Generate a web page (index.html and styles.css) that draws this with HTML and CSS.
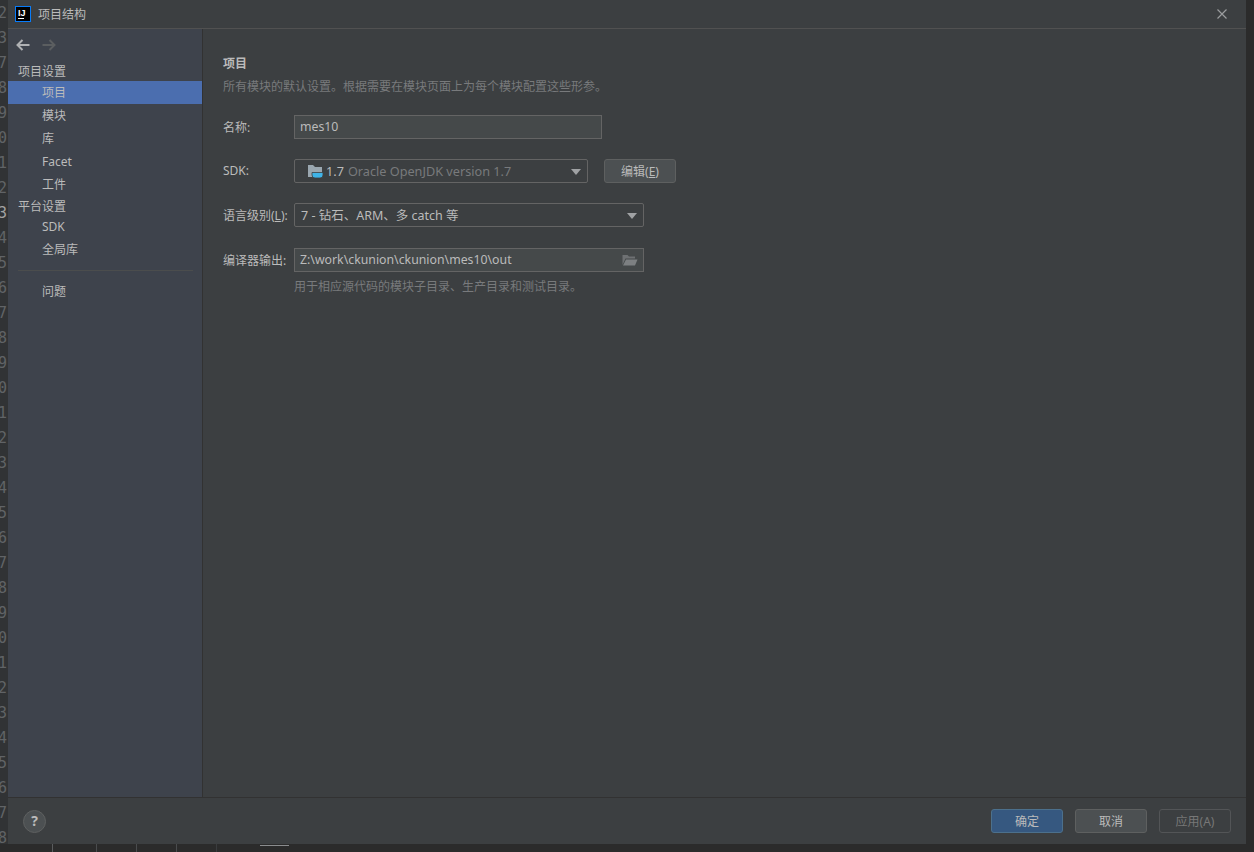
FILE: index.html
```html
<!DOCTYPE html>
<html lang="zh-CN">
<head>
    <meta charset="UTF-8">
    <title>项目结构</title>
    <link rel="stylesheet" href="styles.css">
</head>
<body>

<div class="screen">
    <div class="main-row">
        <!-- editor gutter behind the dialog -->
        <div class="gutter">
            <div>2</div><div>3</div><div>7</div><div>8</div><div>9</div>
            <div>0</div><div>1</div><div>2</div><div class="current">3</div><div>4</div>
            <div>5</div><div>6</div><div>7</div><div>8</div><div>9</div>
            <div>0</div><div>1</div><div>2</div><div>3</div><div>4</div>
            <div>5</div><div>6</div><div>7</div><div>8</div><div>9</div>
            <div>0</div><div>1</div><div>2</div><div>3</div><div>4</div>
            <div>5</div><div>6</div><div>7</div><div>8</div>
        </div>

        <div class="dialog">
            <div class="title-bar">
                <svg class="app-logo" width="16" height="16" viewBox="0 0 16 16">
                    <rect x="0.5" y="0.5" width="15" height="15" fill="#000" stroke="#087cfa"/>
                    <text x="3" y="9.5" class="app-logo-text">IJ</text>
                    <rect x="3" y="12" width="6" height="1" fill="#fff"/>
                </svg>
                <div class="title-text">项目结构</div>
                <svg class="close-icon" width="12" height="12" viewBox="0 0 12 12">
                    <path d="M1.5 1.5 L10.5 10.5 M10.5 1.5 L1.5 10.5" stroke="#9a9c9e" stroke-width="1.2" fill="none"/>
                </svg>
            </div>

            <div class="dialog-body">
                <!-- 左侧导航 -->
                <div class="sidebar">
                    <div class="nav-arrows">
                        <svg width="16" height="14" viewBox="0 0 16 14">
                            <path d="M14.5 7 H2.5 M7.5 2 L2.5 7 L7.5 12" stroke="#afb1b3" stroke-width="2" fill="none"/>
                        </svg>
                        <svg width="16" height="14" viewBox="0 0 16 14">
                            <path d="M1.5 7 H13.5 M8.5 2 L13.5 7 L8.5 12" stroke="#5b5e60" stroke-width="2" fill="none"/>
                        </svg>
                    </div>
                    <div class="side-group">项目设置</div>
                    <div class="side-item selected">项目</div>
                    <div class="side-item">模块</div>
                    <div class="side-item">库</div>
                    <div class="side-item">Facet</div>
                    <div class="side-item">工件</div>
                    <div class="side-group">平台设置</div>
                    <div class="side-item">SDK</div>
                    <div class="side-item">全局库</div>
                    <div class="side-sep"></div>
                    <div class="side-item">问题</div>
                </div>

                <!-- 右侧内容 -->
                <div class="content">
                    <div class="content-title">项目</div>
                    <div class="content-desc">所有模块的默认设置。根据需要在模块页面上为每个模块配置这些形参。</div>

                    <div class="form">
                        <div class="form-row">
                            <div class="form-label">名称:</div>
                            <div class="field input-name">mes10</div>
                        </div>
                        <div class="form-row">
                            <div class="form-label">SDK:</div>
                            <div class="combo combo-sdk">
                                <svg class="sdk-icon" width="16" height="16" viewBox="0 0 16 16">
                                    <path d="M1 2 H6 L8 4 H15 V14 H1 Z" fill="#9aa7b0"/>
                                    <path d="M5 9.5 H16 V12 Q16 15 13 15 H8 Q5 15 5 12 Z" fill="#3fb4e8" stroke="#3c3f41" stroke-width="0.8"/>
                                </svg>
                                <span class="sdk-version">1.7</span>
                                <span class="sdk-name">Oracle OpenJDK version 1.7</span>
                                <div class="combo-arrow"></div>
                            </div>
                            <div class="btn btn-edit">编辑(<u>E</u>)</div>
                        </div>
                        <div class="form-row">
                            <div class="form-label">语言级别(<u>L</u>):</div>
                            <div class="combo combo-wide">
                                <span>7 - 钻石、ARM、多 catch 等</span>
                                <div class="combo-arrow"></div>
                            </div>
                        </div>
                        <div class="form-row row-output">
                            <div class="form-label">编译器输出:</div>
                            <div class="field input-path">
                                <span>Z:\work\ckunion\ckunion\mes10\out</span>
                                <svg width="16" height="12" viewBox="0 0 16 12">
                                    <path d="M0.5 11 V1 H5.5 L7 2.5 H13 V4.5 H3.5 Z" fill="#6e7173"/>
                                    <path d="M1 11.5 L4 5.5 H15.5 L13 11.5 Z" fill="#7d8082"/>
                                </svg>
                            </div>
                        </div>
                    </div>
                    <div class="output-hint">用于相应源代码的模块子目录、生产目录和测试目录。</div>
                </div>
            </div>

            <div class="footer">
                <div class="help-btn">?</div>
                <div class="footer-buttons">
                    <div class="btn btn-default">确定</div>
                    <div class="btn">取消</div>
                    <div class="btn btn-disabled">应用(A)</div>
                </div>
            </div>
        </div>

        <div class="right-strip"></div>
    </div>

    <div class="bottom-strip">
        <div class="tick tick-first"></div>
        <div class="tick"></div>
        <div class="tick"></div>
        <div class="tick"></div>
        <div class="tick tick-faint"></div>
        <div class="tab-mark"></div>
    </div>
</div>

</body>
</html>
```

FILE: styles.css
```css
:root {
    --panel: #3c3f41;
    --side: #3e434c;
    --text: #bbbbbb;
    --muted: #787a7c;
    --line: #323232;
    --field-border: #646464;
}

html, body {
    margin: 0;
    height: 100%;
    overflow: hidden;
}

body {
    background-color: #2b2b2b;
    font-family: "Noto Sans", "Noto Sans CJK SC", sans-serif;
    font-size: 12px;
    color: var(--text);
}

.screen {
    width: 1254px;
    height: 852px;
    display: flex;
    flex-direction: column;
}

.main-row {
    display: flex;
    height: 844px;
}

/* editor behind */
.gutter {
    width: 8px;
    overflow: hidden;
    background-color: #313335;
    display: flex;
    flex-direction: column;
    align-items: flex-end;
    flex-shrink: 0;
    color: #606366;
    font-family: "DejaVu Sans Mono", monospace;
    font-size: 15px;
}

.gutter div {
    height: 25px;
    line-height: 27px;
    margin-right: 1px;
    flex-shrink: 0;
}

.gutter .current {
    color: #a4a3a3;
}

.right-strip {
    width: 8px;
    background-color: #2b2b2b;
}

.bottom-strip {
    height: 8px;
    background-color: #2b2b2b;
    display: flex;
    padding-left: 52px;
    gap: 39px;
}

.tick {
    width: 1px;
    background-color: #4a4c4e;
}

.tick-first {
    margin-right: 4px;
    background-color: #5a5c5e;
}

.tick-faint {
    background-color: #3a3c3e;
}

.tab-mark {
    width: 29px;
    height: 1px;
    margin-left: 4px;
    margin-top: 1px;
    background-color: #8a8c8e;
}

/* dialog */
.dialog {
    flex: 1;
    display: flex;
    flex-direction: column;
    background-color: var(--panel);
}

.title-bar {
    height: 28px;
    display: flex;
    align-items: center;
    border-bottom: 1px solid #515151;
    flex-shrink: 0;
}

.app-logo {
    margin-left: 7px;
}

.app-logo-text {
    font-family: "Liberation Sans", sans-serif;
    font-size: 9px;
    font-weight: 700;
    fill: #fff;
}

.title-text {
    margin-left: 7px;
    flex: 1;
}

.close-icon {
    margin-right: 18px;
}

.dialog-body {
    flex: 1;
    display: flex;
    min-height: 0;
    border-bottom: 1px solid var(--line);
}

.sidebar {
    width: 194px;
    flex-shrink: 0;
    background-color: var(--side);
    border-right: 1px solid var(--line);
}

.nav-arrows {
    height: 32px;
    display: flex;
    align-items: center;
    gap: 10px;
    padding-left: 7px;
}

.side-group {
    height: 20px;
    line-height: 22px;
    padding-left: 10px;
}

.side-item {
    height: 23px;
    line-height: 23px;
    padding-left: 34px;
}

.side-item.selected {
    background-color: #4b6eaf;
}

.side-item + .side-group {
    height: 19px;
}

.side-sep {
    height: 1px;
    margin: 9px 9px 9px 10px;
    background-color: #4b4d4d;
}

.content {
    flex: 1;
    padding: 26px 0 0 20px;
}

.content-title {
    font-weight: 700;
    line-height: 18px;
}

.content-desc {
    margin-top: 5px;
    line-height: 18px;
    color: var(--muted);
}

.form {
    margin-top: 19px;
    display: flex;
    flex-direction: column;
    gap: 20px;
}

.form-row {
    display: flex;
    align-items: center;
    height: 24px;
}

.row-output {
    margin-top: 1px;
}

.form-label {
    width: 71px;
    flex-shrink: 0;
    padding-bottom: 1px;
}

.field, .combo {
    box-sizing: border-box;
    height: 24px;
    display: flex;
    align-items: center;
    border: 1px solid var(--field-border);
    font-size: 12.3px;
    padding-bottom: 1px;
}

.field {
    background-color: #45494a;
    padding-left: 5px;
    padding-right: 5px;
}

.input-name {
    width: 308px;
}

.input-path {
    width: 350px;
    justify-content: space-between;
}

.combo {
    border-radius: 2px;
    padding-left: 6px;
    padding-right: 6px;
    position: relative;
}

.combo-sdk {
    width: 294px;
    padding-left: 12px;
    font-size: 12.7px;
}

.combo-wide {
    width: 350px;
    font-size: 12.5px;
}

.sdk-icon {
    margin-right: 3px;
}

.sdk-name {
    margin-left: 4px;
    color: #787a7c;
}

.combo-arrow {
    position: absolute;
    right: 6px;
    top: 9px;
    width: 0;
    height: 0;
    border-left: 5px solid transparent;
    border-right: 5px solid transparent;
    border-top: 6px solid #a0a2a4;
}

.output-hint {
    margin: 6px 0 0 71px;
    line-height: 18px;
    color: var(--muted);
}

.btn {
    box-sizing: border-box;
    width: 72px;
    height: 24px;
    line-height: 24px;
    text-align: center;
    background-color: #4c5052;
    border: 1px solid #5e6060;
    border-radius: 3px;
}

.btn-edit {
    margin-left: 16px;
}

.btn-default {
    background-color: #365880;
    border-color: #4c708c;
}

.btn-disabled {
    background-color: var(--panel);
    border-color: #535557;
    color: #777777;
}

.footer {
    height: 46px;
    display: flex;
    align-items: center;
    justify-content: space-between;
    flex-shrink: 0;
    padding: 0 15px 0 15px;
}

.help-btn {
    box-sizing: border-box;
    width: 23px;
    height: 23px;
    border-radius: 50%;
    background-color: #4c5052;
    border: 1px solid #5e6060;
    text-align: center;
    line-height: 20px;
    font-size: 14px;
    font-weight: 700;
    color: #bbbbbb;
}

.footer-buttons {
    display: flex;
    gap: 12px;
}
```
